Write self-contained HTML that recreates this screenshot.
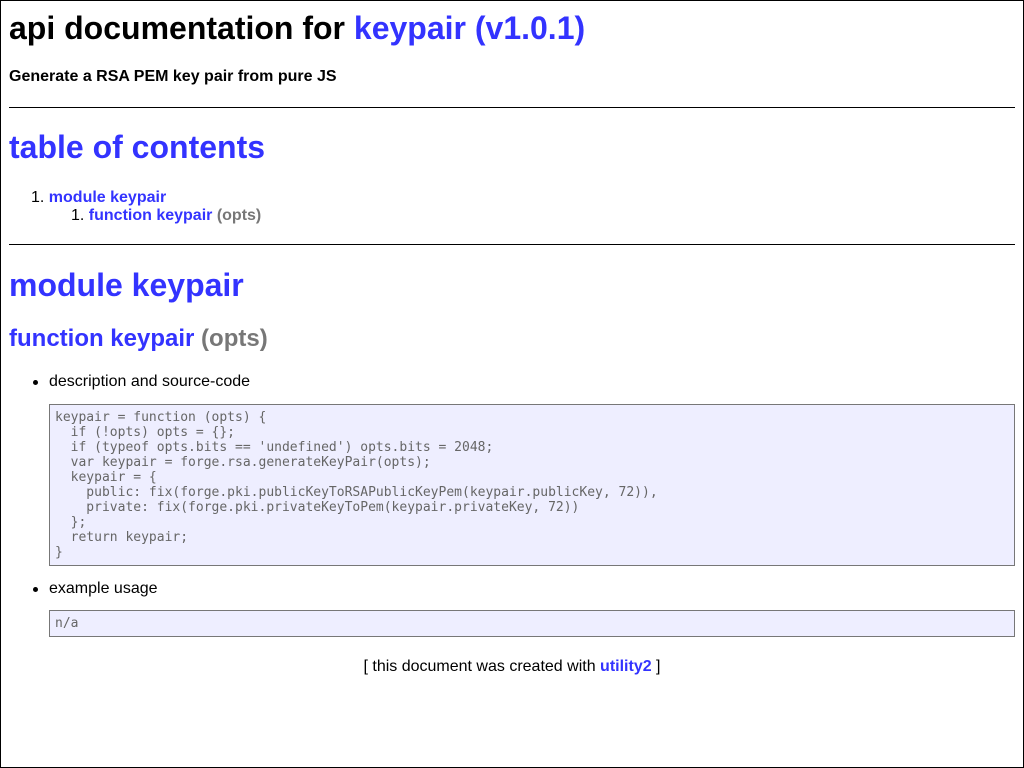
<!DOCTYPE html>
<html><head><meta charset="utf-8"><style>
html,body{margin:0;padding:0}
body{width:1022px;height:766px;border:1px solid #000;position:relative;font-family:"Liberation Sans",Arial,sans-serif;color:#000;background:#fff;overflow:hidden}
.a{position:absolute;left:8px;margin:0;white-space:nowrap}
.b{color:#3333ff;font-weight:bold}
.g{color:#777;font-weight:bold}
h1.a{font-size:32px;line-height:37px}
hr{position:absolute;left:8px;width:1006px;margin:0;border:0;border-top:1px solid #000;height:0}
pre{position:absolute;left:48px;width:954px;margin:0;padding:5px;border:1px solid #777;background:#eef;color:#666;font-family:"DejaVu Sans Mono",monospace;font-size:13px;line-height:15px}
.li{position:absolute;left:48px;font-size:16px;line-height:18px}
.li:before{content:"";position:absolute;left:-16px;top:7px;width:5px;height:5px;border-radius:50%;background:#000}
</style></head><body>
<h1 class="a" style="top:9px;font-weight:bold">api documentation for <span class="b">keypair (v1.0.1)</span></h1>
<div class="a" style="top:67px;font-size:16px;line-height:18px;font-weight:bold">Generate a RSA PEM key pair from pure JS</div>
<hr style="top:106px">
<h1 class="a b" style="top:128px">table of contents</h1>
<div class="a" style="left:30px;top:188px;font-size:16px;line-height:18px">1. <span class="b">module keypair</span></div>
<div class="a" style="left:70px;top:206px;font-size:16px;line-height:18px">1. <span class="b">function keypair</span> <span class="g">(opts)</span></div>
<hr style="top:243px">
<h1 class="a b" style="top:266px">module keypair</h1>
<div class="a" style="top:324px;font-size:24px;line-height:28px"><span class="b">function keypair</span> <span class="g">(opts)</span></div>
<div class="li" style="top:372px">description and source-code</div>
<pre style="top:403px">keypair = function (opts) {
  if (!opts) opts = {};
  if (typeof opts.bits == 'undefined') opts.bits = 2048;
  var keypair = forge.rsa.generateKeyPair(opts);
  keypair = {
    public: fix(forge.pki.publicKeyToRSAPublicKeyPem(keypair.publicKey, 72)),
    private: fix(forge.pki.privateKeyToPem(keypair.privateKey, 72))
  };
  return keypair;
}</pre>
<div class="li" style="top:579px">example usage</div>
<pre style="top:609px">n/a</pre>
<div style="position:absolute;left:0;width:1022px;text-align:center;top:657px;font-size:16px;line-height:18px">[ this document was created with <span class="b">utility2</span> ]</div>
</body></html>
